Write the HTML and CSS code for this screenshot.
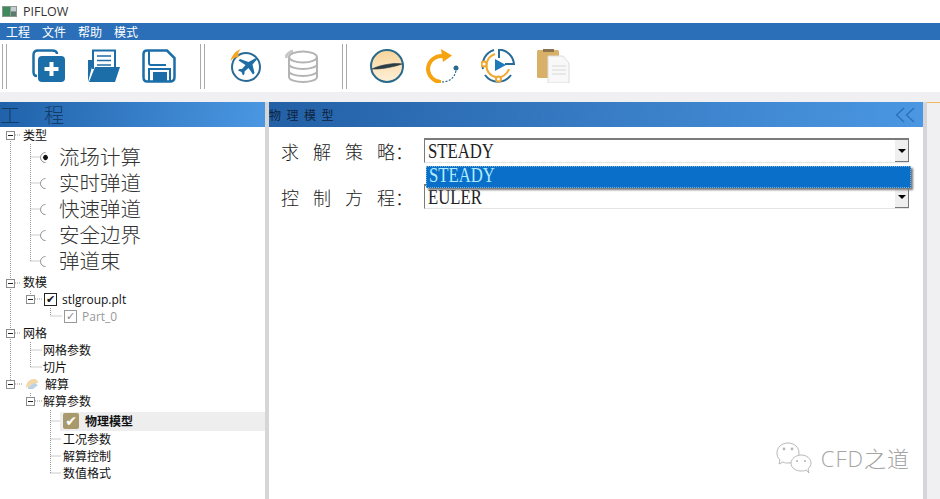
FILE: index.html
```html
<!DOCTYPE html>
<html lang="zh">
<head>
  <meta charset="UTF-8">
  <title>PIFLOW</title>
  <link rel="stylesheet" href="styles.css">
</head>
<body>
<div class="titlebar">
  <svg class="app-icon" width="15" height="11" viewBox="0 0 15 11">
    <rect width="15" height="11" fill="#8a9a90"/>
    <rect x="1" y="1" width="7" height="9" fill="#3f8a5c"/>
    <rect x="9" y="1" width="5" height="4" fill="#c4ccd0"/>
    <rect x="9" y="6" width="5" height="4" fill="#5c7a70"/>
  </svg>
  <span>PIFLOW</span>
</div>

<div class="menubar">
  <span>工程</span><span>文件</span><span>帮助</span><span>模式</span>
</div>

<div class="toolbar">
  <div class="grip"></div>
  <div class="tool-group group-file">
    <svg class="tool" viewBox="0 0 34 34">
      <path d="M5 27Q1.500 27 1.500 23V6Q1.500 1.500 6 1.500H20Q25 1.500 25 5" fill="none" stroke="#1c6ea8" stroke-width="2.500"/>
      <rect x="6" y="7" width="27" height="26" rx="4" fill="#1c6ea8"/>
      <path d="M19.500 13V27M12.500 20H26.500" stroke="#fff" stroke-width="4"/>
    </svg>
    <svg class="tool" viewBox="0 0 34 34">
      <path d="M6 20V1.500H28V20" fill="#fff" stroke="#1c6ea8" stroke-width="2"/>
      <path d="M10 7H24M10 11.500H24M10 16H24" stroke="#1c6ea8" stroke-width="1.500"/>
      <path d="M1 11H5V18L1 33Z" fill="#1c6ea8"/>
      <path d="M8 18H33L28 33H2Z" fill="#1c6ea8"/>
    </svg>
    <svg class="tool" viewBox="0 0 34 34">
      <path d="M5 1.500H25L32.500 9V28Q32.500 32.500 28 32.500H5Q1.500 32.500 1.500 28V5Q1.500 1.500 5 1.500Z" fill="none" stroke="#1c6ea8" stroke-width="2.500"/>
      <path d="M7 2V14Q7 16 9 16H24" fill="none" stroke="#1c6ea8" stroke-width="2"/>
      <path d="M7 32V20H28V32" fill="none" stroke="#1c6ea8" stroke-width="2"/>
      <rect x="11" y="23" width="14" height="9" fill="#1c6ea8"/>
    </svg>
  </div>
  <div class="grip"></div>
  <div class="tool-group group-run">
    <svg class="tool" viewBox="0 0 34 34">
      <circle cx="17" cy="18" r="14" fill="#fff" stroke="#2a6a96" stroke-width="2"/>
      <path d="M1.500 12C3 6 7 1.500 12 0C9 3 9 5 10 8C7 8 4 9 1.500 12Z" fill="#f5a623"/>
      <path d="M26 9.500C27.500 8.500 28.500 10 27.500 11L23.500 15.500L25.500 24L24 25.500L19.500 19L15.500 22.500V25L14 26.500L12.500 23L9 21.500L10.500 20H13L16.500 16L9.500 11.500L11 10L19.500 13Z" fill="#1e6ea5"/>
    </svg>
    <svg class="tool" viewBox="0 0 34 34">
      <path d="M8 2C4 3 1 6 1 9" fill="none" stroke="#c8c8c8" stroke-width="3"/>
      <g fill="#fff" stroke="#b4b4b4" stroke-width="2">
        <path d="M4 9V28C4 31 11 33 18 33S32 31 32 28V9"/>
        <ellipse cx="18" cy="8" rx="14" ry="5.500"/>
      </g>
      <g fill="none" stroke="#b4b4b4" stroke-width="2">
        <path d="M4 15C4 18 11 20 18 20S32 18 32 15"/>
        <path d="M4 22C4 25 11 27 18 27S32 25 32 22"/>
      </g>
    </svg>
  </div>
  <div class="grip"></div>
  <div class="tool-group group-solve">
    <svg class="tool" viewBox="0 0 34 34">
      <defs>
        <linearGradient id="disc" x1="0" y1="0" x2="0" y2="1">
          <stop offset="0" stop-color="#f8d49a"/>
          <stop offset="1" stop-color="#fdf0d8"/>
        </linearGradient>
      </defs>
      <circle cx="17" cy="17" r="16" fill="url(#disc)" stroke="#2a6a8a" stroke-width="2"/>
      <path d="M2 20C10 16 24 13.500 32 15C24 18 10 20.500 2 20Z" fill="#2c3c44" stroke="#2c3c44" stroke-width=".6"/>
    </svg>
    <svg class="tool" viewBox="0 0 34 34">
      <path d="M18 7C8 6 2 13 2 21C3 28 9 33 15 33" fill="none" stroke="#f5a30f" stroke-width="4"/>
      <path d="M15 0L26 6.500L17 13Z" fill="#f5a30f"/>
      <path d="M16 33C23 33 29 29 30 21" fill="none" stroke="#2a6a8a" stroke-width="1.200" stroke-dasharray="2 1.500"/>
      <circle cx="30" cy="19" r="2.500" fill="#2a6a8a"/>
    </svg>
    <svg class="tool" viewBox="0 0 34 34">
      <path d="M2 20A16 16 0 0 1 13 1M4 26A16 16 0 0 0 30 26" fill="none" stroke="#2a6a96" stroke-width="2"/>
      <path d="M18 9V0.500A16 16 0 0 1 33 15H24" fill="none" stroke="#2a6a96" stroke-width="2"/>
      <path d="M28 20A11.500 11.500 0 0 1 5.500 16A11.500 11.500 0 0 1 14 5" fill="none" stroke="#f0a830" stroke-width="2"/>
      <path d="M14 10L25 16L14 22Z" fill="#1e7ab8"/>
      <circle cx="3" cy="15" r="2.500" fill="#fff" stroke="#f0a830" stroke-width="2"/>
      <circle cx="17.500" cy="30" r="2.500" fill="#fff" stroke="#f0a830" stroke-width="2"/>
    </svg>
    <svg class="tool" viewBox="0 0 34 34">
      <rect x="0" y="1" width="22" height="28" rx="1.500" fill="#d8b068"/>
      <rect x="6" y="0" width="11" height="3" fill="#8a7450"/>
      <path d="M11 7H26L32 14V34H11Z" fill="#f8f8f8" stroke="#dcdcdc"/>
      <path d="M15 17H29M15 21H29M15 25H29" stroke="#e2e2e2" stroke-width="1.500"/>
    </svg>
  </div>
</div>

<div class="main">
  <div class="left-panel">
    <div class="panel-head left-head">工<span class="head-gap"></span>程</div>
    <div class="tree">
      <svg class="tree-lines" width="265" height="355" viewBox="0 127 265 355">
        <g fill="none" stroke="#999" stroke-dasharray="1 1">
          <path d="M10.500 135V384M15 135H21M15 283H21M15 333H21M15 384H23"/>
          <path d="M30.500 144V261M30.500 157H40M30.500 183H40M30.500 209H40M30.500 235H40M30.500 261H40"/>
          <path d="M30.500 291V299M35 299H43M50.500 308V316H62"/>
          <path d="M30.500 342V367M30.500 350H42M30.500 367H42M30.500 393V401M35 401H42"/>
          <path d="M50.500 410V473M50.500 421H61M50.500 439H61M50.500 456H61M50.500 473H61"/>
        </g>
        <g fill="#fff" stroke="#8c8c8c">
          <rect x="6.500" y="131.500" width="8" height="8"/>
          <rect x="6.500" y="279.500" width="8" height="8"/>
          <rect x="26.500" y="295.500" width="8" height="8"/>
          <rect x="6.500" y="329.500" width="8" height="8"/>
          <rect x="6.500" y="380.500" width="8" height="8"/>
          <rect x="26.500" y="397.500" width="8" height="8"/>
        </g>
        <path d="M8 135.500H13M8 283.500H13M28 299.500H33M8 333.500H13M8 384.500H13M28 401.500H33" stroke="#222"/>
      </svg>

      <div class="row indent-1">类型</div>
      <div class="row big"><span class="radio on"></span>流场计算</div>
      <div class="row big"><span class="radio"></span>实时弹道</div>
      <div class="row big"><span class="radio"></span>快速弹道</div>
      <div class="row big"><span class="radio"></span>安全边界</div>
      <div class="row big"><span class="radio"></span>弹道束</div>
      <div class="row indent-1">数模</div>
      <div class="row model"><span class="check">✔</span><span class="latin">stlgroup.plt</span></div>
      <div class="row part"><span class="check off">✓</span><span class="latin">Part_0</span></div>
      <div class="row indent-1">网格</div>
      <div class="row indent-2">网格参数</div>
      <div class="row indent-2">切片</div>
      <div class="row solve">
        <svg class="solve-icon" width="14" height="13" viewBox="0 0 14 13">
          <path d="M1 10C1 4 5 1 9 1C12 1 13 3 13 5L6 7Z" fill="#f2d8a8"/>
          <path d="M3 9L9 5L13 7L8 11H3Z" fill="#bcd2e4"/>
        </svg>解算
      </div>
      <div class="row indent-2">解算参数</div>
      <div class="row active"><span class="done">✔</span>物理模型</div>
      <div class="row indent-3">工况参数</div>
      <div class="row indent-3">解算控制</div>
      <div class="row indent-3">数值格式</div>
    </div>
  </div>

  <div class="splitter"></div>

  <div class="right-panel">
    <div class="panel-head right-head">
      <span class="head-title">物理模型</span>
      <svg width="20" height="16" viewBox="0 0 20 16">
        <path d="M9 1L1.500 8L9 15M19 1L11.500 8L19 15" fill="none" stroke="#2a6fb8" stroke-width="1.300"/>
      </svg>
    </div>
    <div class="form">
      <div class="field">
        <label><span>求</span><span>解</span><span>策</span><span>略</span><span class="colon">：</span></label>
        <div class="combo"><span class="value">STEADY</span><span class="combo-btn"></span></div>
      </div>
      <div class="field">
        <label><span>控</span><span>制</span><span>方</span><span>程</span><span class="colon">：</span></label>
        <div class="combo"><span class="value">EULER</span><span class="combo-btn"></span></div>
      </div>
      <div class="popup"><span class="value">STEADY</span></div>
    </div>
    <div class="watermark">
      <svg width="36" height="32" viewBox="0 0 36 32">
        <g fill="#fff" stroke="#b8b8b8" stroke-width="1">
          <path d="M12 1C6 1 1 5 1 11C1 14 2 16 4 18L3 22L7 20C9 21 10 21 12 21C18 21 23 17 23 11C23 5 18 1 12 1Z"/>
          <path d="M25 13C20 13 15 17 15 21C15 26 20 29 25 29C27 29 28 29 30 28L33 31L32 27C34 25 35 23 35 21C35 17 31 13 25 13Z"/>
        </g>
        <g fill="#b8b8b8">
          <circle cx="8" cy="7" r="1.400"/>
          <circle cx="16" cy="7" r="1.400"/>
          <circle cx="21" cy="19" r="1.100"/>
          <circle cx="29" cy="19" r="1.100"/>
        </g>
      </svg>
      <span class="mark-text">CFD之道</span>
    </div>
  </div>

  <div class="side-strip"></div>
</div>
</body>
</html>
```

FILE: styles.css
```css
html, body {
  margin: 0;
  height: 499px;
  overflow: hidden;
}
body {
  background-color: #f0f0f2;
  color: #111;
  font-family: "Noto Sans CJK SC", sans-serif;
  font-size: 12px;
}

.titlebar {
  height: 23px;
  background-color: #fff;
  display: flex;
  align-items: center;
  gap: 6px;
  padding-left: 2px;
  font-family: "Open Sans", sans-serif;
  font-size: 12.500px;
  color: #333;
}
.menubar {
  height: 17px;
  background-color: #2a6fb8;
  color: #fff;
  display: flex;
  align-items: center;
  gap: 12px;
  padding-left: 6px;
  line-height: 17px;
}

.toolbar {
  height: 52px;
  background-color: #fff;
  display: flex;
  align-items: center;
  padding-left: 2px;
}
.grip {
  width: 3px;
  height: 45px;
  border-left: 1px solid #aaa;
  border-right: 1px solid #aaa;
}
.tool-group {
  display: flex;
}
.tool {
  width: 34px;
  height: 34px;
}
.group-file {
  gap: 21px;
  margin: 0 24px 0 25px;
}
.group-run {
  gap: 22px;
  margin: 0 23px 0 24px;
}
.group-solve {
  gap: 21.5px;
  margin-left: 23px;
}

.main {
  display: flex;
  margin-top: 10px;
  height: 397px;
}
.panel-head {
  height: 25px;
  display: flex;
  align-items: center;
}
.left-panel {
  width: 265px;
  background-color: #fff;
}
.left-head {
  background: linear-gradient(100deg, #1f62aa, #4b97e2);
  font-size: 20px;
  font-weight: 300;
  color: #143c68;
}
.head-gap {
  width: 24px;
}
.splitter {
  width: 4px;
  background-color: #d6d6d8;
}

.tree {
  position: relative;
}
.tree-lines {
  position: absolute;
  left: 0;
  top: 0;
}
.row {
  position: relative;
  box-sizing: border-box;
  height: 17px;
  padding-bottom: 1px;
  display: flex;
  align-items: center;
  line-height: 16px;
}
.indent-1 {
  padding-left: 23px;
}
.indent-2 {
  padding-left: 43px;
}
.indent-3 {
  padding-left: 63px;
}
.big {
  height: 26px;
  padding-left: 40px;
  padding-bottom: 2px;
  font-size: 20.500px;
  font-weight: 300;
  line-height: 24px;
  color: #333;
}
.radio {
  box-sizing: border-box;
  width: 11px;
  height: 11px;
  margin-top: 2px;
  margin-right: 8px;
  border: 1px solid;
  border-color: #999 transparent transparent #999;
  border-radius: 50%;
  transform: rotate(-45deg);
  display: flex;
  align-items: center;
  justify-content: center;
}
.radio.on::after {
  content: "";
  width: 5px;
  height: 5px;
  border-radius: 50%;
  background-color: #111;
}
.check {
  width: 11px;
  height: 11px;
  border: 1px solid #222;
  display: flex;
  align-items: center;
  justify-content: center;
  font-family: "DejaVu Sans", sans-serif;
  font-size: 11px;
  line-height: 11px;
}
.check.off {
  border-color: #999;
  color: #888;
}
.latin {
  font-family: "Open Sans", sans-serif;
  font-size: 12px;
}
.model {
  padding-left: 44px;
  padding-bottom: 0;
  gap: 5px;
}
.part {
  padding-left: 64px;
  padding-bottom: 0;
  gap: 5px;
  color: #999;
}
.solve {
  padding-left: 25px;
  gap: 6px;
}
.active {
  height: 19px;
  margin: 2px 0 0 60px;
  padding-left: 3px;
  background-color: #eeeeef;
  font-weight: bold;
  gap: 6px;
}
.done {
  width: 16px;
  height: 16px;
  border-radius: 2px;
  background-color: #a89a6c;
  color: #fff;
  font-family: "DejaVu Sans", sans-serif;
  font-size: 14px;
  font-weight: normal;
  line-height: 16px;
  text-align: center;
}

.right-panel {
  position: relative;
  width: 654px;
  background-color: #fff;
}
.right-head {
  background: linear-gradient(100deg, #2360a6, #4b97e2);
  justify-content: space-between;
  padding-right: 8px;
}
.head-title {
  letter-spacing: 5.500px;
  color: #0e2440;
}
.form {
  position: relative;
  padding: 11px 14px 0 12px;
}
.field {
  display: flex;
  align-items: center;
  height: 25px;
  margin-bottom: 21px;
}
.field label {
  width: 143px;
  display: flex;
  gap: 14px;
  font-size: 18px;
  line-height: 22px;
  white-space: nowrap;
  color: #222;
  font-weight: 300;
}
.colon {
  margin-left: -14px;
}
.combo {
  flex: 1;
  height: 25px;
  box-sizing: border-box;
  border-top: 2px solid #7a7a7a;
  border-left: 1px solid #7a7a7a;
  border-bottom: 1px solid #e4e4e4;
  display: flex;
  justify-content: space-between;
  align-items: center;
  padding-left: 3px;
}
.value {
  display: inline-block;
  font-family: "Liberation Serif", serif;
  font-size: 22px;
  line-height: 16px;
  color: #222;
  transform: scaleX(0.76);
  transform-origin: left center;
}
.combo-btn {
  width: 14px;
  height: 100%;
  box-sizing: border-box;
  background-color: #efefef;
  border-right: 1px solid #777;
  border-bottom: 1px solid #777;
  display: flex;
  align-items: center;
  justify-content: center;
}
.combo-btn::after {
  content: "";
  border-top: 4px solid #000;
  border-left: 4px solid transparent;
  border-right: 4px solid transparent;
}
.popup {
  position: absolute;
  left: 157px;
  top: 39px;
  width: 481px;
  height: 20px;
  border: 1px dotted #7fb0d8;
  background-color: #0a6fc8;
  box-shadow: 2px 2px 2px #777;
  line-height: 20px;
  padding-left: 2px;
}
.popup .value {
  color: #b0ecff;
}
.watermark {
  position: absolute;
  right: 13px;
  bottom: 25px;
  display: flex;
  align-items: center;
  gap: 9px;
}
.mark-text {
  font-family: "Open Sans", "Noto Sans CJK SC", sans-serif;
  font-size: 22px;
  font-weight: 300;
  letter-spacing: 1px;
  line-height: 30px;
  color: #a4a4a4;
}

.side-strip {
  flex: 1;
  border-left: 4px solid #d6d6d8;
}
.side-strip::before {
  content: "";
  display: block;
  height: 1px;
  background-color: #f0b860;
}
```
